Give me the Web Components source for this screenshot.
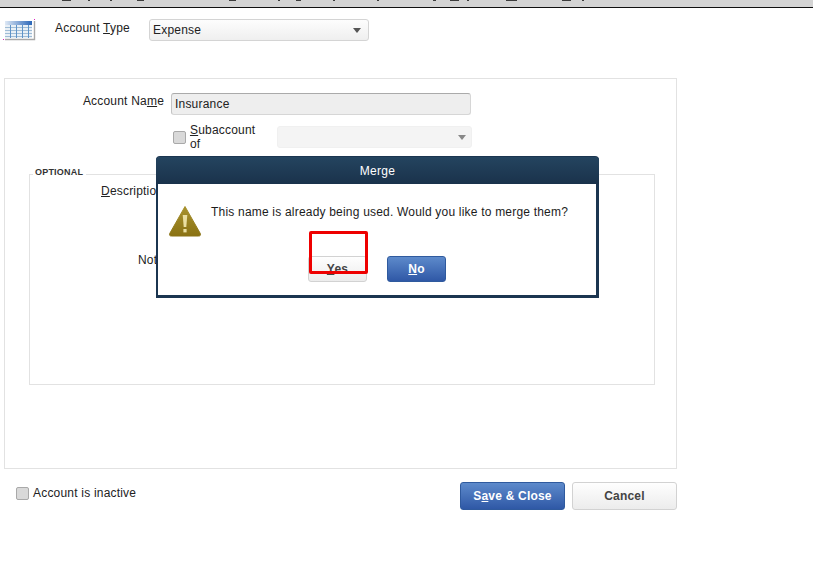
<!DOCTYPE html>
<html>
<head>
<meta charset="utf-8">
<title>Merge</title>
<style>
    html, body { margin: 0; padding: 0; background: #fff; }
    body { font: 12px "Liberation Sans", Arial, sans-serif; color: #222; width: 816px; height: 572px; overflow: hidden; }
</style>
</head>
<body>
<account-page></account-page>

<script>
class QbCheck extends HTMLElement {
    constructor() {
        super();
        this.attachShadow({ mode: 'open' });
        this.shadowRoot.innerHTML = `
            <style>
                :host { display: inline-flex; align-items: center; gap: 4px; }
                i {
                    display: block;
                    box-sizing: border-box;
                    width: 13px;
                    height: 13px;
                    border: 1px solid #a9a9a9;
                    border-radius: 2px;
                    background: #d9d9d9;
                }
            </style>
            <i></i><span><slot></slot></span>
        `;
    }
}

class QbSelect extends HTMLElement {
    constructor() {
        super();
        this.attachShadow({ mode: 'open' });
        this.shadowRoot.innerHTML = `
            <style>
                :host {
                    display: flex;
                    align-items: center;
                    justify-content: space-between;
                    box-sizing: border-box;
                    height: 22px;
                    padding: 0 7px 0 3px;
                    border: 1px solid #d4d4d4;
                    border-radius: 3px;
                    background: linear-gradient(#fdfdfd, #efefef);
                    color: #222;
                }
                :host([disabled]) {
                    border-color: #f0f0f0;
                    background: #f4f4f4;
                    padding-right: 5px;
                }
                b {
                    width: 0;
                    height: 0;
                    border: 4px solid transparent;
                    border-top: 5px solid #555;
                    border-bottom: 0;
                }
                :host([disabled]) b { border-top-color: #888; }
            </style>
            <span><slot></slot></span><b></b>
        `;
    }
}

class QbButton extends HTMLElement {
    constructor() {
        super();
        this.attachShadow({ mode: 'open' });
        this.shadowRoot.innerHTML = `
            <style>
                :host {
                    display: flex;
                    align-items: center;
                    justify-content: center;
                    box-sizing: border-box;
                    border: 1px solid #d2d2d2;
                    border-radius: 3px;
                    background: linear-gradient(#fefefe, #ececec);
                    color: #444;
                    font-weight: bold;
                }
                :host([primary]) {
                    border-color: #2f5a9e;
                    background: linear-gradient(#5d8acb, #2f58a6);
                    color: #fff;
                }
            </style>
            <slot></slot>
        `;
    }
}

class QbDialog extends HTMLElement {
    constructor() {
        super();
        this.attachShadow({ mode: 'open' });
        this.shadowRoot.innerHTML = `
            <style>
                :host {
                    position: absolute;
                    left: 156px;
                    top: 156px;
                    box-sizing: border-box;
                    width: 443px;
                    height: 142px;
                    border: solid #1b3550;
                    border-width: 1px 3px 3px 2px;
                    border-radius: 4px 4px 0 0;
                    background: #fff;
                    display: flex;
                    flex-direction: column;
                }
                header {
                    height: 27px;
                    margin: 0 -3px 0 -2px;
                    background: linear-gradient(#24445f, #1a324b);
                    border-radius: 3px 3px 0 0;
                    color: #fff;
                    text-align: center;
                    line-height: 29px;
                    letter-spacing: .3px;
                    font-size: 12px;
                }
                .body {
                    display: flex;
                    padding: 21px 0 0 10px;
                    gap: 9px;
                    color: #1c1c1c;
                }
                svg { display: block; margin-top: 0; flex: none; }
                p { margin: 0; padding-top: 0; line-height: 15px; letter-spacing: .2px; white-space: nowrap; }
                .actions {
                    display: flex;
                    gap: 20px;
                    margin-left: 150px;
                    margin-top: 19px;
                }
                qb-button { width: 59px; height: 26px; }
                .mark {
                    position: absolute;
                    left: 151px;
                    top: 74px;
                    box-sizing: border-box;
                    width: 59px;
                    height: 43px;
                    border: 3px solid #ee0000;
                    border-radius: 2px;
                }
            </style>
            <header>Merge</header>
            <div class="body">
                <svg width="34" height="32" viewBox="0 0 34 32">
                    <defs>
                        <linearGradient id="warn" x1="0" y1="0" x2="0" y2="1">
                            <stop offset="0" stop-color="#a8922e"/>
                            <stop offset="1" stop-color="#8a7214"/>
                        </linearGradient>
                    </defs>
                    <path d="M17 1.5 L32 28 Q33.5 31 30.5 31 L3.5 31 Q.5 31 2 28 Z" fill="url(#warn)" stroke="url(#warn)" stroke-linejoin="round"/>
                    <path d="M14.7 10 L19.3 10 L18.3 22 L15.7 22 Z" fill="#eadfa2"/>
                    <rect x="15.4" y="24" width="3.2" height="3.4" fill="#eadfa2"/>
                </svg>
                <p><slot></slot></p>
            </div>
            <div class="actions">
                <qb-button><span><u>Y</u>es</span></qb-button>
                <qb-button primary><span><u>N</u>o</span></qb-button>
            </div>
            <div class="mark"></div>
        `;
    }
}

class AccountPage extends HTMLElement {
    constructor() {
        super();
        this.attachShadow({ mode: 'open' });
        this.shadowRoot.innerHTML = `
            <style>
                :host { display: block; position: relative; width: 816px; height: 572px; letter-spacing: .2px; }
                .strip { display: block; width: 813px; height: 8px; }
                .type {
                    display: flex;
                    align-items: flex-start;
                    padding: 11px 0 0 3px;
                    height: 22px;
                }
                .type svg { flex: none; }
                .type label { width: 94px; margin-left: 19px; padding-top: 2px; }
                .type qb-select { width: 220px; }
                .panel {
                    box-sizing: border-box;
                    width: 673px;
                    height: 391px;
                    margin: 37px 0 0 4px;
                    border: 1px solid #e2e2e2;
                    padding-top: 14px;
                }
                .row { display: flex; align-items: center; }
                .row > label { width: 159px; text-align: right; padding-bottom: 7px; }
                .name {
                    box-sizing: border-box;
                    width: 300px;
                    height: 22px;
                    margin-left: 7px;
                    padding: 1px 0 0 3px;
                    line-height: 19px;
                    color: #222;
                    background: #eee;
                    border: 1px solid #d6d6d6;
                    border-top-color: #aaa;
                    border-left-color: #c4c4c4;
                    border-radius: 3px;
                }
                .sub { margin: 8px 0 0 168px; }
                .sub qb-select { width: 195px; margin-left: 8px; }
                .sub qb-check { width: 96px; }
                .optional {
                    position: relative;
                    box-sizing: border-box;
                    width: 626px;
                    height: 211px;
                    margin: 23px 0 0 24px;
                    border: 1px solid #e2e2e2;
                }
                .optional h4 {
                    position: absolute;
                    left: 3px;
                    top: -8px;
                    margin: 0;
                    padding: 0 3px 0 2px;
                    background: #fff;
                    font: bold 9px/11px "Liberation Sans", Arial, sans-serif;
                    color: #333;
                }
                .optional div { line-height: 15px; }
                .desc { margin: 9px 0 0 71px; }
                .notes { margin: 54px 0 0 108px; }
                .bottom {
                    display: flex;
                    align-items: flex-start;
                    width: 677px;
                    margin-top: 13px;
                    color: #222;
                }
                .bottom qb-check { margin: 4px 0 0 16px; }
                .bottom .save { width: 105px; height: 28px; margin-left: auto; }
                .bottom .cancel { width: 105px; height: 28px; margin-left: 7px; }
            </style>

            <svg class="strip" width="813" height="8" viewBox="0 0 813 8">
                <rect width="813" height="7" fill="#d4d4d4"/>
                <rect y="7" width="813" height="1" fill="#111"/>
                <g fill="#3c3c3c">
                    <rect x="62" y="0" width="9" height="1"/><rect x="88" y="0" width="2" height="1"/>
                    <rect x="110" y="0" width="2" height="1"/><rect x="137" y="0" width="7" height="1"/>
                    <rect x="229" y="0" width="7" height="1"/><rect x="278" y="0" width="2" height="1"/>
                    <rect x="296" y="0" width="5" height="1"/><rect x="333" y="0" width="2" height="1"/>
                    <rect x="377" y="0" width="2" height="1"/><rect x="433" y="0" width="3" height="1"/>
                    <rect x="450" y="0" width="9" height="1"/><rect x="467" y="0" width="2" height="1"/>
                    <rect x="506" y="0" width="11" height="1"/><rect x="562" y="0" width="9" height="1"/>
                    <rect x="582" y="0" width="2" height="1"/>
                </g>
            </svg>

            <div class="type">
                <svg width="33" height="22" viewBox="0 0 33 22">
                    <defs>
                        <linearGradient id="head" x1="0" y1="0" x2="1" y2="0">
                            <stop offset="0" stop-color="#dfe9f5"/>
                            <stop offset="1" stop-color="#2a66b8"/>
                        </linearGradient>
                    </defs>
                    <rect x="2" y="2" width="27" height="4" fill="url(#head)"/>
                    <rect x="2" y="6" width="27" height="13" fill="#e9f0f6"/>
                    <g stroke="#9fbcd6">
                        <path d="M2 8.5H29M2 11.5H29M2 14.5H29M2 17.5H29"/>
                    </g>
                    <g stroke="#5f93c8">
                        <path d="M7.5 6V19M13.5 6V19M19.5 6V19M25.5 6V19"/>
                    </g>
                    <path d="M31.5 2V20.5H2" fill="none" stroke="#a8a8a8" stroke-width="1.4"/>
                    <rect x="31" y="0" width="1" height="1" fill="#e020c0"/>
                    <rect x="0" y="20" width="1" height="1" fill="#e020c0"/>
                </svg>
                <label>Account <u>T</u>ype</label>
                <qb-select>Expense</qb-select>
            </div>

            <section class="panel">
                <div class="row">
                    <label>Account Na<u>m</u>e</label>
                    <div class="name">Insurance</div>
                </div>
                <div class="row sub">
                    <qb-check><u>S</u>ubaccount of</qb-check>
                    <qb-select disabled></qb-select>
                </div>
                <div class="optional">
                    <h4>OPTIONAL</h4>
                    <div class="desc"><u>D</u>escription</div>
                    <div class="notes">Notes</div>
                </div>
            </section>

            <div class="bottom">
                <qb-check>Account is inactive</qb-check>
                <qb-button primary class="save"><span>S<u>a</u>ve &amp; Close</span></qb-button>
                <qb-button class="cancel">Cancel</qb-button>
            </div>

            <qb-dialog>This name is already being used. Would you like to merge them?</qb-dialog>
        `;
    }
}

customElements.define('qb-check', QbCheck);
customElements.define('qb-select', QbSelect);
customElements.define('qb-button', QbButton);
customElements.define('qb-dialog', QbDialog);
customElements.define('account-page', AccountPage);
</script>
</body>
</html>
